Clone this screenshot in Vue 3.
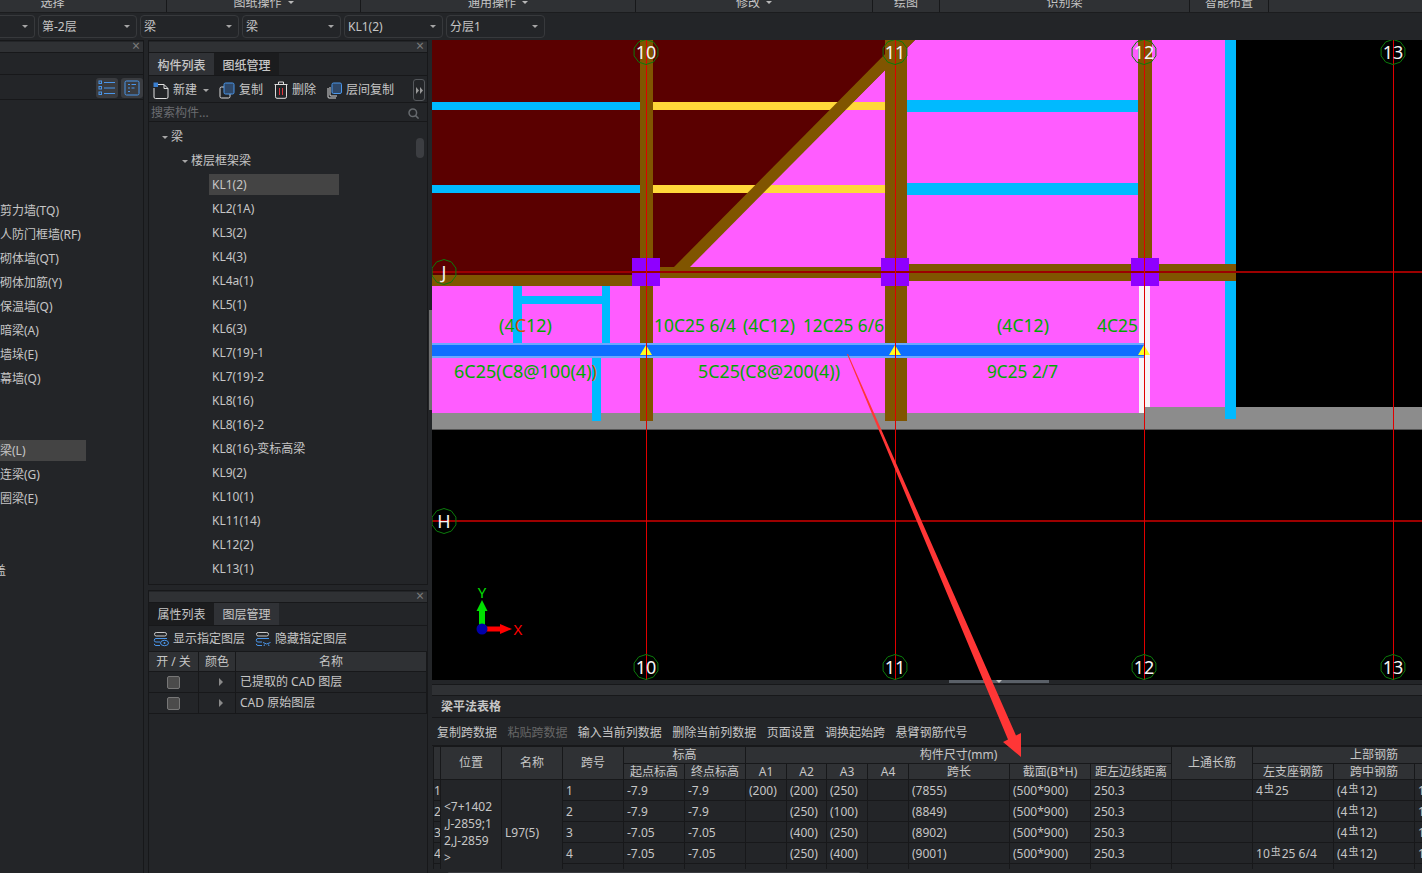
<script setup>
const menus = [
  { t: '选择', w: 228, first: true },
  { t: '图纸操作', w: 194, caret: true },
  { t: '通用操作', w: 275, caret: true },
  { t: '修改', w: 237, caret: true },
  { t: '绘图', w: 67 },
  { t: '识别梁', w: 250 },
  { t: '智能布置', w: 79 }
]
const selects = ['第-2层', '梁', '梁', 'KL1(2)', '分层1']
const leftList = ['', '', '', '', '剪力墙(TQ)', '人防门框墙(RF)', '砌体墙(QT)', '砌体加筋(Y)', '保温墙(Q)', '暗梁(A)', '墙垛(E)', '幕墙(Q)', '', '', '梁(L)', '连梁(G)', '圈梁(E)', '', '', '盖']
const kl = ['KL1(2)', 'KL2(1A)', 'KL3(2)', 'KL4(3)', 'KL4a(1)', 'KL5(1)', 'KL6(3)', 'KL7(19)-1', 'KL7(19)-2', 'KL8(16)', 'KL8(16)-2', 'KL8(16)-变标高梁', 'KL9(2)', 'KL10(1)', 'KL11(14)', 'KL12(2)', 'KL13(1)']
const tools = ['复制跨数据', '粘贴跨数据', '输入当前列数据', '删除当前列数据', '页面设置', '调换起始跨', '悬臂钢筋代号']

const colW = [7, 61, 61, 61, 61, 61, 41, 40, 41, 41, 101, 81, 81, 81, 81, 81, 81]
const tableW = colW.reduce((a, b) => a + b, 0)
const subHead = ['起点标高', '终点标高', 'A1', 'A2', 'A3', 'A4', '跨长', '截面(B*H)', '距左边线距离']
const steelHead = ['左支座钢筋', '跨中钢筋', '右支座钢筋']
const posText = '<7+1402\n,J-2859;1\n2,J-2859\n>'
const rows = [
  { n: 1, s: ['1', '-7.9', '-7.9', '(200)', '(200)', '(250)', '', '(7855)', '(500*900)', '250.3', '', '4#25', '(4#12)', '10#25 6/4'] },
  { n: 2, s: ['2', '-7.9', '-7.9', '', '(250)', '(100)', '', '(8849)', '(500*900)', '250.3', '', '', '(4#12)', '12#25 6/6'] },
  { n: 3, s: ['3', '-7.05', '-7.05', '', '(400)', '(250)', '', '(8902)', '(500*900)', '250.3', '', '', '(4#12)', '12#25 6/6'] },
  { n: 4, s: ['4', '-7.05', '-7.05', '', '(250)', '(400)', '', '(9001)', '(500*900)', '250.3', '', '10#25 6/4', '(4#12)', '12#25 6/6'] },
  { n: 5, s: ['', '', '', '', '', '', '', '', '', '', '', '', '', ''] }
]

function gon(cx, cy, r = 12.5) {
  const p = []
  for (let i = 0; i < 10; i++) {
    const a = (Math.PI * 2 * i) / 10 + Math.PI / 10
    p.push(`${(cx + r * Math.cos(a)).toFixed(1)},${(cy + r * Math.sin(a)).toFixed(1)}`)
  }
  return p.join(' ')
}
const axes = [646, 895, 1144, 1393]
const bubbles = [
  ...axes.flatMap((x, i) => [
    { x, y: 52, t: String(10 + i) },
    { x, y: 667, t: String(10 + i) }
  ]),
  { x: 444, y: 272, t: 'J' },
  { x: 444, y: 521, t: 'H' }
]
const labels = [
  { x: 654, y: 332, w: 82, t: '10C25 6/4' },
  { x: 743, y: 332, w: 52, t: '(4C12)' },
  { x: 803, y: 332, w: 81, t: '12C25 6/6' },
  { x: 997, y: 332, w: 52, t: '(4C12)' },
  { x: 1097, y: 332, w: 41, t: '4C25' },
  { x: 698, y: 378, w: 142, t: '5C25(C8@200(4))' },
  { x: 987, y: 378, w: 71, t: '9C25 2/7' }
]
const triangles = [646, 895, 1144]
const purple = [632, 881, 1131]
</script>

<template>
  <div class="app">
    <header class="menu">
      <div v-for="m in menus" :key="m.t" class="menu-item" :class="{ first: m.first }" :style="{ width: m.w + 'px' }">
        <span class="menu-text">{{ m.t }}<i v-if="m.caret" class="mini-caret"></i></span>
      </div>
    </header>

    <div class="selects">
      <div class="select stub"><i class="caret"></i></div>
      <div v-for="(s, i) in selects" :key="i" class="select">
        <span class="sel-text">{{ s }}</span><i class="caret"></i>
      </div>
    </div>

    <div class="body">
      <aside class="panel left">
        <div class="bar"><span class="x">×</span></div>
        <div class="left-head"></div>
        <div class="left-tools">
          <span class="view-btn">
            <svg width="18" height="16" viewBox="0 0 18 16" fill="none" stroke="#4a96ea">
              <path d="M6 2.5h11M6 8h11M6 13.5h11" />
              <rect x="1" y="1" width="2.5" height="2.5" /><rect x="1" y="6.5" width="2.5" height="2.5" /><rect x="1" y="12" width="2.5" height="2.5" />
            </svg>
          </span>
          <span class="view-btn">
            <svg width="16" height="16" viewBox="0 0 16 16" fill="none" stroke="#4a96ea">
              <rect x="1" y="1" width="14" height="14" rx="1.5" />
              <path d="M4 4.500h2M7.500 4.500h4.500M4 8h2M7.500 8h3M4 11.500h2" />
            </svg>
          </span>
        </div>
        <ul class="left-list">
          <li v-for="(t, i) in leftList" :key="i" :class="{ sel: t === '梁(L)', cut: t === '盖' }"><span>{{ t }}</span></li>
        </ul>
      </aside>

      <div class="mid">
        <section class="panel comp">
          <div class="bar"><span class="x">×</span></div>
          <div class="tabs">
            <span class="tab on strong">构件列表</span>
            <span class="tab strong">图纸管理</span>
          </div>
          <div class="tools">
            <span class="tool">
              <svg width="16" height="17" viewBox="0 0 16 17" fill="none">
                <path d="M4 2.500h7l4 4v8.500a1.500 1.500 0 0 1-1.500 1.500h-11a1.500 1.500 0 0 1-1.500-1.500v-9" stroke="#e0e0e0" />
                <path d="M11 2.500v4h4" stroke="#e0e0e0" />
                <rect x="0.500" y="0.500" width="4.500" height="4.500" fill="#3a7fd0" />
              </svg>
              新建
            </span>
            <i class="caret tool-caret"></i>
            <span class="tool t-copy">
              <svg width="16" height="17" viewBox="0 0 16 17" fill="none">
                <rect x="1" y="5" width="10" height="11" rx="1.500" stroke="#dcdcdc" />
                <rect x="5" y="1" width="10" height="11" rx="1.500" fill="#2f4868" stroke="#4a96ea" />
              </svg>
              复制
            </span>
            <span class="tool t-del">
              <svg width="14" height="18" viewBox="0 0 14 18" fill="none" stroke="#dcdcdc">
                <path d="M0.500 3.500h13M4.500 3.500v-2.500h5v2.500M1.500 3.500v12.300a1.500 1.500 0 0 0 1.500 1.500h8a1.500 1.500 0 0 0 1.500-1.500v-12.300" />
                <path d="M5.500 7v7M8.500 7v7" stroke="#e0353c" />
              </svg>
              删除
            </span>
            <span class="tool t-layer">
              <svg width="15" height="17" viewBox="0 0 15 17" fill="none">
                <path d="M1 6v9a1 1 0 0 0 1 1h7M3 5v8a1 1 0 0 0 1 1h6" stroke="#dcdcdc" />
                <rect x="5" y="1" width="9.500" height="10.500" rx="1.500" fill="#2f4868" stroke="#4a96ea" />
              </svg>
              层间复制
            </span>
            <span class="more">
              <svg width="7" height="7" viewBox="0 0 7 7" fill="#9a9a9a"><path d="M0 0l3 3.500-3 3.500zM4 0l3 3.500-3 3.500z" /></svg>
            </span>
          </div>
          <div class="search">
            <span>搜索构件...</span>
            <svg width="11" height="11" viewBox="0 0 11 11" fill="none" stroke="#666a6e" stroke-width="1.500">
              <circle cx="4.800" cy="4.800" r="3.800" /><path d="M7.600 7.600l3 3" />
            </svg>
          </div>
          <div class="tree">
            <div class="scroll-thumb"></div>
            <div class="node n1"><i class="caret"></i>梁</div>
            <div class="node n2"><i class="caret"></i>楼层框架梁</div>
            <div v-for="(k, i) in kl" :key="k" class="node n3"><span class="kl" :class="{ sel: i === 0 }">{{ k }}</span></div>
          </div>
        </section>

        <section class="panel layer">
          <div class="bar"><span class="x">×</span></div>
          <div class="tabs">
            <span class="tab strong-l">属性列表</span>
            <span class="tab on strong-l">图层管理</span>
          </div>
          <div class="layer-tools">
            <span class="tool">
              <svg width="16" height="15" viewBox="0 0 16 15" fill="none">
                <rect x="1.500" y="0.500" width="12" height="3.500" rx="1.700" stroke="#c8c8c8" />
                <path d="M14 6.500h-11a1.700 1.700 0 0 0 0 3.500h4M7 13.500h-4a1.700 1.700 0 0 1-1.700-1.700" stroke="#4a96ea" />
                <ellipse cx="11.500" cy="11" rx="4" ry="2.700" stroke="#4a96ea" /><circle cx="11.500" cy="11" r="1" fill="#4a96ea" />
              </svg>
              显示指定图层
            </span>
            <span class="tool">
              <svg width="16" height="15" viewBox="0 0 16 15" fill="none">
                <rect x="1.500" y="0.500" width="12" height="3.500" rx="1.700" stroke="#c8c8c8" />
                <path d="M14 6.500h-11a1.700 1.700 0 0 0 0 3.500h4M7 13.500h-4a1.700 1.700 0 0 1-1.700-1.700" stroke="#4a96ea" />
                <path d="M8 10.500q3.500 3 7.500 0M9.500 12.500l-.5 1.500M13.500 12.500l.5 1.500" stroke="#4a96ea" />
              </svg>
              隐藏指定图层
            </span>
          </div>
          <div class="lrow lhead"><span>开 / 关</span><span>颜色</span><span>名称</span></div>
          <div class="lrow"><span><i class="check"></i></span><span><i class="tri"></i></span><span class="lname">已提取的 CAD 图层</span></div>
          <div class="lrow"><span><i class="check"></i></span><span><i class="tri"></i></span><span class="lname">CAD 原始图层</span></div>
        </section>
      </div>

      <div class="right">
        <svg class="canvas" width="990" height="640" viewBox="432 40 990 640" font-family="'Noto Sans','Noto Sans CJK SC',sans-serif">
          <rect x="432" y="40" width="990" height="640" fill="#000" />
          <rect x="432" y="40" width="793" height="374" fill="#ff5cff" />
          <polygon points="432,40 915,40 689,266 673,275 432,275" fill="#5a0000" />

          <rect x="432" y="102" width="208" height="8" fill="#00baff" />
          <rect x="432" y="185" width="208" height="8" fill="#00baff" />
          <rect x="653" y="102" width="232" height="8" fill="#ffd83a" />
          <rect x="653" y="185" width="232" height="8" fill="#ffd83a" />
          <rect x="907" y="100" width="231" height="12" fill="#00baff" />
          <rect x="907" y="183" width="231" height="12" fill="#00baff" />

          <polygon points="673,268 899,40 915,40 689,268" fill="#805500" />

          <rect x="513" y="286" width="9" height="57" fill="#00baff" />
          <rect x="602" y="286" width="8" height="57" fill="#00baff" />
          <rect x="522" y="296" width="80" height="8" fill="#00baff" />

          <rect x="1145" y="407" width="277" height="22" fill="#8c8c8c" />
          <rect x="432" y="413" width="990" height="16" fill="#8c8c8c" />
          <rect x="432" y="429" width="990" height="1" fill="#555" />

          <rect x="592" y="358" width="9" height="63" fill="#00baff" />
          <rect x="1225" y="40" width="11" height="379" fill="#00baff" />

          <rect x="640" y="40" width="13" height="381" fill="#805500" />
          <rect x="885" y="40" width="22" height="381" fill="#805500" />
          <rect x="1138" y="40" width="14" height="220" fill="#805500" />
          <rect x="1139" y="286" width="11" height="121" fill="#f8f4f8" />
          <rect x="1139" y="407" width="6" height="6" fill="#f8f4f8" />

          <rect x="432" y="275" width="202" height="11" fill="#805500" />
          <rect x="658" y="267" width="225" height="11" fill="#805500" />
          <rect x="907" y="264" width="226" height="17" fill="#805500" />
          <rect x="1156" y="264" width="80" height="17" fill="#805500" />

          <rect x="432" y="343" width="713" height="15" fill="#6aa8ff" />
          <rect x="432" y="345" width="713" height="11" fill="#0e6eff" />

          <rect v-for="x in purple" :key="x" :x="x" y="258" width="28" height="28" fill="#8f00ff" />
          <polygon v-for="x in triangles" :key="'t' + x" :points="`${x},345 ${x + 6},355 ${x - 6},355`" fill="#ffff20" />

          <line x1="432" y1="272" x2="1422" y2="272" stroke="#9c0000" stroke-width="2" />
          <line x1="432" y1="521" x2="1422" y2="521" stroke="#9c0000" stroke-width="2" />
          <line v-for="x in axes" :key="'a' + x" :x1="x + 0.500" y1="40" :x2="x + 0.500" y2="680" stroke="#e00000" />

          <g v-for="b in bubbles" :key="b.t + b.y">
            <polygon :points="gon(b.x, b.y)" fill="none" stroke="#0b7a0b" />
            <text :x="b.x" :y="b.y + 6.500" text-anchor="middle" font-size="18" fill="#f4f4f4">{{ b.t }}</text>
          </g>

          <g font-size="18" fill="#00aa00">
            <text x="499" y="332" textLength="53" lengthAdjust="spacingAndGlyphs">(4<tspan fill="#d84a00">C</tspan>12)</text>
            <text x="454" y="378" textLength="143" lengthAdjust="spacingAndGlyphs">6C25(C8@100(4)<tspan fill="#c85a00">)</tspan></text>
            <text v-for="l in labels" :key="l.x" :x="l.x" :y="l.y" :textLength="l.w" lengthAdjust="spacingAndGlyphs">{{ l.t }}</text>
          </g>

          <path d="M479 611h6v16h-6z" fill="#00e000" />
          <polygon points="482,600 487.500,611 476.500,611" fill="#00e000" />
          <path d="M486 626.500h14v5h-14z" fill="#ff0000" />
          <polygon points="512,629 500,624 500,634" fill="#ff0000" />
          <circle cx="482" cy="629" r="5.500" fill="#0000a8" />
          <text x="482" y="598" text-anchor="middle" font-size="15" fill="#00e000">Y</text>
          <text x="518" y="635" text-anchor="middle" font-size="15" fill="#ff0000">X</text>
        </svg>

        <div class="split"><span class="grip"><i></i></span></div>

        <section class="grid-panel">
          <div class="gp-bar"></div>
          <div class="gp-title">梁平法表格</div>
          <div class="gp-tools">
            <span v-for="(t, i) in tools" :key="t" :class="{ off: i === 1 }">{{ t }}</span>
          </div>
          <div class="gp-table">
            <table :style="{ width: tableW + 'px' }">
              <colgroup>
                <col v-for="(w, i) in colW" :key="i" :style="{ width: w + 'px' }" />
              </colgroup>
              <thead>
                <tr class="h1">
                  <th rowspan="2"></th>
                  <th rowspan="2">位置</th>
                  <th rowspan="2">名称</th>
                  <th rowspan="2">跨号</th>
                  <th colspan="2">标高</th>
                  <th colspan="7">构件尺寸(mm)</th>
                  <th rowspan="2">上通长筋</th>
                  <th colspan="3">上部钢筋</th>
                </tr>
                <tr class="h2">
                  <th v-for="h in subHead" :key="h">{{ h }}</th>
                  <th v-for="h in steelHead" :key="h">{{ h }}</th>
                </tr>
              </thead>
              <tbody>
                <tr v-for="(r, ri) in rows" :key="r.n">
                  <td class="no">{{ r.n }}</td>
                  <template v-if="ri === 0">
                    <td rowspan="5" class="pos">{{ posText }}</td>
                    <td rowspan="5">L97(5)</td>
                  </template>
                  <td v-for="(c, ci) in r.s" :key="ci">
                    <template v-for="(p, pi) in c.split('#')" :key="pi"><span v-if="pi" class="st">虫</span>{{ p }}</template>
                  </td>
                </tr>
              </tbody>
            </table>
          </div>
          <div class="gp-scroll"><span></span></div>
        </section>
      </div>

      <span class="edge"></span>
    </div>

    <svg class="arrow" width="1422" height="873" viewBox="0 0 1422 873">
      <polygon points="847,354 1008,739.500 1003,742 1021,757 1021,733 1016,735.500 848,354" fill="#ff3636" />
    </svg>
  </div>
</template>

<style>
html, body { margin: 0; background: #232528; overflow: hidden; }
</style>

<style scoped>
.app {
  position: relative;
  width: 1422px;
  height: 873px;
  overflow: hidden;
  display: flex;
  flex-direction: column;
  background: #232528;
  color: #c6c6c6;
  font: 12px/1.2 "Noto Sans", "Noto Sans CJK SC", sans-serif;
}
.menu {
  height: 13px;
  flex: none;
  display: flex;
  background: #2f3134;
  border-bottom: 1px solid #1b1c1e;
  box-sizing: border-box;
  overflow: hidden;
}
.menu-item {
  flex: none;
  box-sizing: border-box;
  border-right: 1px solid #17181a;
  text-align: center;
  line-height: 12px;
  margin-top: -3px;
  height: 17px;
}
.menu-item.first { margin-left: -61px; }
.menu-text { display: inline-block; }
.mini-caret {
  display: inline-block;
  margin-left: 6px;
  vertical-align: 3px;
  border: 3px solid transparent;
  border-top-color: #b8b8b8;
  border-bottom: 0;
}
.selects {
  height: 27px;
  flex: none;
  box-sizing: border-box;
  padding-top: 2px;
  display: flex;
  gap: 3px;
  background: #232528;
}
.select {
  width: 99px;
  height: 23px;
  box-sizing: border-box;
  border: 1px solid #37393c;
  border-radius: 4px;
  padding: 0 6px 0 3px;
  display: flex;
  align-items: center;
  justify-content: space-between;
}
.select.stub { width: 35px; border-left: 0; border-radius: 0 4px 4px 0; justify-content: flex-end; }
.sel-text { padding-top: 2px; }
.caret {
  display: inline-block;
  border: 3px solid transparent;
  border-top: 3px solid #a6a6a6;
  border-bottom: 0;
}
.body {
  position: relative;
  flex: 1;
  min-height: 0;
  display: flex;
}
.panel { box-sizing: border-box; border: 1px solid #17181a; background: #232528; }
.bar {
  height: 10px;
  background: #2f3134;
  border-bottom: 1px solid #17181a;
  position: relative;
  margin-top: 1px;
}
.x {
  position: absolute;
  right: 3px;
  top: -3px;
  font-size: 14px;
  line-height: 14px;
  color: #7b7b7b;
}
.left {
  width: 144px;
  flex: none;
  border-left: 0;
  border-bottom: 0;
  margin-right: 4px;
}
.left-head { height: 21px; border-bottom: 1px solid #17181a; }
.left-tools {
  height: 25px;
  box-sizing: border-box;
  border-bottom: 1px solid #17181a;
  display: flex;
  justify-content: flex-end;
  gap: 3px;
  padding-top: 3px;
}
.view-btn {
  width: 22px;
  height: 20px;
  border-radius: 3px;
  background: #3a3c40;
  display: flex;
  align-items: center;
  justify-content: center;
}
.left-list { list-style: none; margin: 0; padding: 2px 0 0; }
.left-list li { height: 24px; display: flex; align-items: center; }
.left-list li span { line-height: 21px; height: 21px; display: block; width: 86px; }
.left-list li.sel span { background: #444; }
.left-list li.cut span { margin-left: -6px; }
.mid { width: 280px; flex: none; display: flex; flex-direction: column; gap: 5px; margin-right: 4px; }
.comp { height: 545px; flex: none; overflow: hidden; }
.layer { flex: 1; min-height: 0; border-bottom: 0; }
.tabs { height: 23px; display: flex; border-bottom: 1px solid #17181a; box-sizing: border-box; }
.tab {
  width: 65px;
  text-align: center;
  line-height: 23px;
  background: #1b1c1e;
}
.tab.on { background: #303236; }
.strong { font-weight: 500; }
.comp .tab { line-height: 25px; }
.tools {
  height: 27px;
  box-sizing: border-box;
  display: flex;
  align-items: center;
  padding: 2px 0 0 4px;
  border-bottom: 1px solid #17181a;
  position: relative;
}
.tool { display: inline-flex; align-items: center; gap: 4px; }
.tool-caret { margin-left: 6px; }
.t-copy { margin-left: 10px; }
.t-del { margin-left: 11px; }
.t-layer { margin-left: 11px; }
.more {
  position: absolute;
  right: 2px;
  top: 3px;
  width: 10px;
  height: 20px;
  border: 1px solid #55585c;
  border-radius: 3px;
  display: flex;
  align-items: center;
  justify-content: center;
}
.search {
  height: 19px;
  box-sizing: border-box;
  padding: 2px 8px 0 2px;
  display: flex;
  align-items: center;
  justify-content: space-between;
  color: #6a6c70;
  border-bottom: 1px solid #17181a;
}
.tree { position: relative; padding-top: 2px; }
.scroll-thumb {
  position: absolute;
  left: 267px;
  top: 16px;
  width: 8px;
  height: 20px;
  border-radius: 4px;
  background: #3c3e42;
}
.node { height: 24px; box-sizing: border-box; display: flex; align-items: center; }
.node .caret { margin-right: 3px; }
.n1 { padding: 2px 0 0 13px; }
.n2 { padding: 2px 0 0 33px; }
.n3 { padding-left: 60px; }
.kl { width: 127px; height: 21px; line-height: 21px; padding-left: 3px; }
.kl.sel { background: #444; }
.layer-tools {
  height: 26px;
  box-sizing: border-box;
  display: flex;
  align-items: center;
  gap: 10px;
  padding: 2px 0 0 4px;
  border-bottom: 1px solid #17181a;
}
.lrow {
  display: grid;
  grid-template-columns: 50px 37px 191px;
  height: 21px;
  box-sizing: border-box;
  border-bottom: 1px solid #17181a;
  text-align: center;
  line-height: 20px;
}
.lrow > span { border-right: 1px solid #17181a; display: flex; align-items: center; justify-content: center; }
.lhead { background: #2f3134; height: 20px; }
.lrow .lname { justify-content: flex-start; padding-left: 4px; }
.check {
  width: 13px;
  height: 13px;
  box-sizing: border-box;
  background: #4b4b4b;
  border: 1px solid #777;
  border-radius: 2px;
}
.tri {
  margin-left: 8px;
  border: 4px solid transparent;
  border-left: 4px solid #8a8a8a;
  border-right: 0;
}
.right { flex: 1; min-width: 0; display: flex; flex-direction: column; }
.canvas { display: block; flex: none; }
.split { height: 4px; flex: none; background: #232528; display: flex; justify-content: flex-start; }
.grip { margin-left: 517px; width: 100px; height: 3px; background: #5a6068; display: flex; justify-content: center; }
.grip i { border: 3px solid transparent; border-top: 3px solid #c0c0c0; border-bottom: 0; }
.grid-panel { flex: 1; min-height: 0; display: flex; flex-direction: column; overflow: hidden; }
.gp-bar { height: 10px; flex: none; background: #2f3134; border-top: 1px solid #17181a; border-bottom: 1px solid #17181a; box-sizing: content-box; }
.gp-title { height: 21px; flex: none; line-height: 21px; padding-left: 9px; font-weight: 600; border-bottom: 1px solid #17181a; }
.gp-tools {
  height: 28px;
  flex: none;
  box-sizing: border-box;
  display: flex;
  align-items: center;
  gap: 10.400px;
  padding: 3px 0 0 5px;
  border-bottom: 1px solid #17181a;
}
.gp-tools .off { color: #666; }
.gp-table { height: 123px; flex: none; overflow: hidden; }
table { table-layout: fixed; border-collapse: collapse; margin-left: 1px; }
th, td {
  border: 1px solid #17181a;
  padding: 0 3px;
  font-weight: 400;
  white-space: nowrap;
  overflow: hidden;
  box-sizing: border-box;
}
th { background: #2f3134; padding: 0; text-align: center; line-height: 14px; }
.h1 th { height: 17px; }
.h2 th { height: 16px; }
td { height: 21px; line-height: 17px; }
td.no { padding: 0; text-align: center; }
td.pos { white-space: pre; line-height: 17px; padding: 0 0 0 3px; }
.st { font-size: 10px; line-height: 0; vertical-align: 3px; margin: 0 1px; }
.gp-scroll { flex: 1; position: relative; }
.gp-scroll span { position: absolute; left: 16px; top: 3px; width: 412px; height: 2px; border-radius: 2px; background: #3a3c40; }
.edge { position: absolute; left: 429px; top: 270px; width: 3px; height: 100px; background: #707070; }
.arrow { position: absolute; left: 0; top: 0; pointer-events: none; }
</style>
